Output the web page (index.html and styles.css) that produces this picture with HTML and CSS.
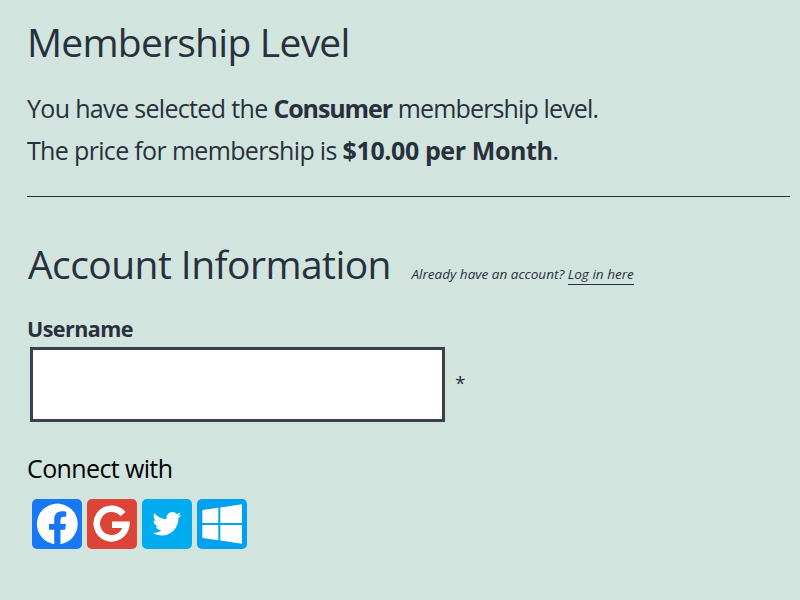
FILE: index.html
```html
<!DOCTYPE html>
<html lang="en">
<head>
<meta charset="utf-8">
<title>Membership Checkout</title>
<link rel="stylesheet" href="styles.css">
</head>
<body>
<main class="checkout">
  <section class="level">
    <h2 class="heading heading-level">Membership Level</h2>
    <p class="line"><span class="intro">You have selected the</span> <strong class="name">Consumer</strong> <span class="outro">membership level.</span></p>
    <p class="line"><span class="intro">The price for membership is</span> <strong class="price">$10.00 per Month</strong>.</p>
  </section>
  <hr class="rule">
  <section class="account">
    <div class="account-head">
      <h2 class="heading heading-account">Account Information</h2>
      <span class="login">Already have an account? <a class="login-link" href="#">Log in here</a></span>
    </div>
    <label class="label" for="username">Username</label>
    <div class="field">
      <input class="input" id="username" type="text">
      <span class="required">*</span>
    </div>
  </section>
  <section class="social">
    <div class="social-title">Connect with</div>
    <div class="social-list">
      <a class="icon facebook" href="#" aria-label="Facebook"><svg viewBox="0 0 50 50"><circle cx="25.300" cy="25" r="20.400" fill="#fff"/><path fill="#1877f2" d="M22.200 46V30.800h-5.200v-5.900h5.200v-4.500c0-5.300 3.100-8.100 7.800-8.100 2.200 0 4.300.4 4.300.4v5h-2.500c-2.500 0-3.300 1.500-3.300 3.100v4.100h5.500l-.9 5.900h-4.600V46z"/></svg></a>
      <a class="icon google" href="#" aria-label="Google"><svg viewBox="0 0 50 50"><path fill="none" stroke="#fff" stroke-width="6.600" d="M36 15.100A14.800 14.800 0 1 0 39.300 25.800H25"/></svg></a>
      <a class="icon twitter" href="#" aria-label="Twitter"><svg viewBox="0 0 50 50"><path fill="#fff" transform="translate(10.500 10.400) scale(1.200)" d="M23.954 4.569a10 10 0 0 1-2.825.775 4.958 4.958 0 0 0 2.163-2.723c-.951.555-2.005.959-3.127 1.184a4.920 4.920 0 0 0-8.384 4.482C7.691 8.094 4.066 6.130 1.640 3.161a4.822 4.822 0 0 0-.666 2.475c0 1.710.870 3.213 2.188 4.096a4.904 4.904 0 0 1-2.228-.616v.061a4.923 4.923 0 0 0 3.946 4.827 4.996 4.996 0 0 1-2.212.085 4.937 4.937 0 0 0 4.604 3.417 9.868 9.868 0 0 1-6.102 2.105c-.390 0-.779-.023-1.170-.067a13.995 13.995 0 0 0 7.557 2.209c9.054 0 13.999-7.496 13.999-13.986 0-.209 0-.420-.015-.630a9.936 9.936 0 0 0 2.460-2.548z"/></svg></a>
      <a class="icon windows" href="#" aria-label="Windows"><svg viewBox="0 0 50 50"><path fill="#fff" d="M5.300 11.100 21.300 8.700V24H5.300zM23.300 8.400 44.900 5.300V24H23.300zM5.300 26H21.300V41.300L5.300 39zM23.300 26H44.900V44.700L23.300 41.600z"/></svg></a>
    </div>
  </section>
</main>
</body>
</html>
```
FILE: styles.css
```css
* { box-sizing: border-box; }
body {
  margin: 0;
  background: #d1e4dd;
  color: #28303d;
  font-family: "Open Sans", "Noto Sans", sans-serif;
  font-size: 25px;
}
.checkout { padding: 17px 10px 0 27px; }
.heading {
  margin: 0;
  font-size: 39px;
  line-height: 50px;
  font-weight: 375;
  letter-spacing: -0.300px;
  white-space: nowrap;
}
.heading { font-weight: 400; letter-spacing: -0.750px; }
.heading-level { margin-bottom: 20px; }
.line { margin: 0; line-height: 42px; white-space: nowrap; letter-spacing: -0.660px; }
.name { letter-spacing: -1.100px; }
.outro { letter-spacing: -0.860px; }
.price { letter-spacing: -0.400px; }
.rule { margin: 25px 0 42px; border: 0; height: 1px; background: #28303d; }
.account-head { display: flex; align-items: baseline; height: 50px; }
.heading-account { width: 384px; padding-left: 1px; letter-spacing: -0.560px; }
.login { padding-left: 0.500px; font-size: 13.500px; font-style: italic; letter-spacing: 0.020px; white-space: nowrap; }
.login-link { color: inherit; text-decoration: none; border-bottom: 1px solid #28303d; padding-bottom: 1px; }
.label { display: block; margin-top: 25px; height: 33px; line-height: 30px; font-size: 21.500px; font-weight: 700; letter-spacing: -0.550px; }
.field { display: flex; align-items: center; gap: 10px; padding-left: 3px; }
.input { width: 415px; height: 75px; border: 3px solid #39414d; background: #fff; padding: 10px; font: inherit; }
.required { font-size: 19px; line-height: 30px; margin-top: -3px; }
.social { margin-top: 26px; color: #000; }
.social-title { line-height: 40px; height: 51px; letter-spacing: -0.620px; }
.social-list { display: flex; gap: 5px; padding-left: 5px; }
.icon { width: 50px; height: 50px; border-radius: 5px; overflow: hidden; }
.icon svg { display: block; width: 50px; height: 50px; }
.facebook { background: #1877f2; }
.google { background: #dc4437; }
.twitter { background: #00abf0; }
.windows { background: #00a1f1; }
```
